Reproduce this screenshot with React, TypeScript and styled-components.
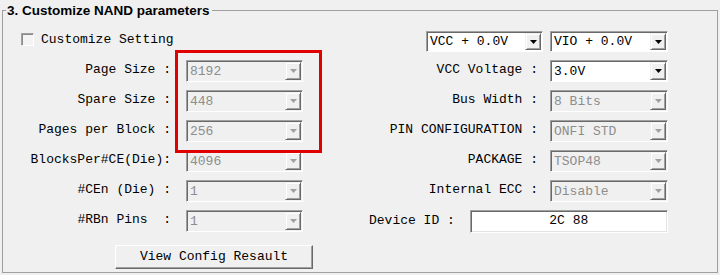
import { Fragment } from "react";
import styled, { createGlobalStyle } from "styled-components";

const GlobalStyle = createGlobalStyle`
  html, body {
    margin: 0;
    padding: 0;
    background: #f0f0f0;
  }
  body {
    width: 720px;
    height: 275px;
    overflow: hidden;
    font-family: "Liberation Mono", "Courier New", monospace;
    font-size: 13px;
    color: #000;
  }
`;

const Group = styled.fieldset`
  box-sizing: border-box;
  margin: 0 2px;
  width: 716px;
  height: 273px;
  padding: 0;
  border: 1px solid #a0a0a0;
  min-width: 0;
`;

const Title = styled.legend`
  margin-left: 3px;
  padding: 0 2px 0 1px;
  font-family: "Liberation Sans", Arial, sans-serif;
  font-weight: bold;
  font-size: 13.5px;
  line-height: 21px;
  color: #000;
`;

const Body = styled.div`
  position: relative;
  display: flex;
`;

const LeftCol = styled.div`
  width: 327px;
  display: flex;
  flex-direction: column;
  padding-top: 12px;
`;

const RightCol = styled.div`
  width: 338px;
  display: flex;
  flex-direction: column;
  padding-top: 10px;
`;

const CheckRow = styled.label`
  display: flex;
  align-items: center;
  gap: 7px;
  height: 13px;
  margin-left: 18px;
  white-space: pre;
`;

const CheckBox = styled.span`
  box-sizing: border-box;
  width: 13px;
  height: 13px;
  background: #f4f4f4;
  border: 1px solid;
  border-color: #a0a0a0 #ffffff #ffffff #a0a0a0;
  box-shadow: inset 1px 1px 0 #8a8a8a;
`;

const FieldGrid = styled.div<{ $label: number; $field: number; $gap: number; $top: number }>`
  display: grid;
  grid-template-columns: ${(p) => p.$label}px ${(p) => p.$field}px;
  grid-auto-rows: 22px;
  column-gap: ${(p) => p.$gap}px;
  row-gap: 8px;
  margin-top: ${(p) => p.$top}px;
`;

const Label = styled.span`
  align-self: center;
  text-align: right;
  white-space: pre;
  line-height: 15px;
  padding-bottom: 3px;
`;

const Combo = styled.div<{ $enabled?: boolean; $w?: number; $h?: number }>`
  box-sizing: border-box;
  width: ${(p) => (p.$w ? `${p.$w}px` : "100%")};
  height: ${(p) => p.$h ?? 22}px;
  display: flex;
  background: ${(p) => (p.$enabled ? "#ffffff" : "#f0f0f0")};
  border: 1px solid;
  border-color: #a0a0a0 #ffffff #ffffff #a0a0a0;
  box-shadow: inset 1px 1px 0 #696969;
  padding: 1px;
`;

const ComboValue = styled.span<{ $enabled?: boolean }>`
  flex: 1;
  display: flex;
  align-items: center;
  padding-left: 2px;
  white-space: pre;
  color: ${(p) => (p.$enabled ? "#000" : "#8d8d8d")};
`;

const DropButton = styled.span`
  box-sizing: border-box;
  width: 16px;
  display: flex;
  align-items: center;
  justify-content: center;
  background: #f0f0f0;
  border: 1px solid;
  border-color: #f0f0f0 #696969 #696969 #f0f0f0;
  box-shadow: inset 1px 1px 0 #ffffff, inset -1px -1px 0 #a0a0a0;
`;

const TopRow = styled.div`
  display: flex;
  justify-content: flex-end;
  gap: 7px;
`;

const DeviceRow = styled.div`
  display: flex;
  align-items: center;
  gap: 15px;
  margin-top: 8px;
  padding-left: 39px;
`;

const TextField = styled.div`
  box-sizing: border-box;
  width: 198px;
  height: 23px;
  display: flex;
  align-items: center;
  justify-content: center;
  padding-bottom: 2px;
  background: #ffffff;
  border: 1px solid;
  border-color: #a0a0a0 #ffffff #ffffff #a0a0a0;
  box-shadow: inset 1px 1px 0 #696969, inset -1px -1px 0 #e3e3e3;
  white-space: pre;
`;

const PushButton = styled.button`
  box-sizing: border-box;
  width: 198px;
  height: 24px;
  margin: 13px 0 0 112px;
  padding: 0 0 2px;
  background: #f0f0f0;
  border: 1px solid;
  border-color: #ffffff #696969 #696969 #ffffff;
  box-shadow: inset -1px -1px 0 #a0a0a0;
  font-family: "Liberation Mono", "Courier New", monospace;
  font-size: 13px;
  color: #000;
  white-space: pre;
`;

const Highlight = styled.div`
  position: absolute;
  left: 172px;
  top: 29px;
  width: 147px;
  height: 103px;
  box-sizing: border-box;
  border: 3px solid #e00000;
  pointer-events: none;
`;

const Arrow = ({ enabled }: { enabled?: boolean }) => (
  <svg width="7" height="4" viewBox="0 0 7 4">
    <polygon points="0,0 7,0 3.5,4" fill={enabled ? "#000" : "#a0a0a0"} />
  </svg>
);

interface IDropProps {
  value: string;
  enabled?: boolean;
  w?: number;
  h?: number;
}

const Drop = ({ value, enabled, w, h }: IDropProps) => (
  <Combo $enabled={enabled} $w={w} $h={h}>
    <ComboValue $enabled={enabled}>{value}</ComboValue>
    <DropButton>
      <Arrow enabled={enabled} />
    </DropButton>
  </Combo>
);

const leftFields = [
  { label: "Page Size :", value: "8192" },
  { label: "Spare Size :", value: "448" },
  { label: "Pages per Block :", value: "256" },
  { label: "BlocksPer#CE(Die):", value: "4096" },
  { label: "#CEn (Die) :", value: "1" },
  { label: "#RBn Pins  :", value: "1" },
];

const rightFields = [
  { label: "VCC Voltage :", value: "3.0V", enabled: true },
  { label: "Bus Width :", value: "8 Bits" },
  { label: "PIN CONFIGURATION :", value: "ONFI STD" },
  { label: "PACKAGE :", value: "TSOP48" },
  { label: "Internal ECC :", value: "Disable" },
];

const App = () => {
  return (
    <>
      <GlobalStyle />
      <Group>
        <Title>3. Customize NAND parameters</Title>
        <Body>
          <LeftCol>
            <CheckRow>
              <CheckBox />
              Customize Setting
            </CheckRow>
            <FieldGrid $label={168} $field={117} $gap={15} $top={14}>
              {leftFields.map((f) => (
                <Fragment key={f.label}>
                  <Label>{f.label}</Label>
                  <Drop value={f.value} />
                </Fragment>
              ))}
            </FieldGrid>
            <PushButton type="button">View Config Resault</PushButton>
          </LeftCol>

          <RightCol>
            <TopRow>
              <Drop value="VCC + 0.0V" enabled w={117} h={21} />
              <Drop value="VIO + 0.0V" enabled w={118} h={21} />
            </TopRow>
            <FieldGrid $label={208} $field={118} $gap={12} $top={8}>
              {rightFields.map((f) => (
                <Fragment key={f.label}>
                  <Label>{f.label}</Label>
                  <Drop value={f.value} enabled={f.enabled} />
                </Fragment>
              ))}
            </FieldGrid>
            <DeviceRow>
              <Label>Device ID :</Label>
              <TextField>2C 88</TextField>
            </DeviceRow>
          </RightCol>

          <Highlight />
        </Body>
      </Group>
    </>
  );
};

export default App;
